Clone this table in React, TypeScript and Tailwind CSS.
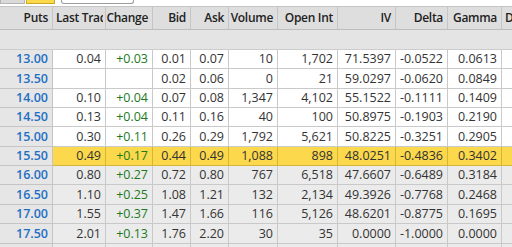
const cols = ['Puts', 'Last Trade', 'Change', 'Bid', 'Ask', 'Volume', 'Open Int', 'IV', 'Delta', 'Gamma', 'Dollar Delta'];

const rows: string[][] = [
    ['13.00', '0.04', '+0.03', '0.01', '0.07', '10', '1,702', '71.5397', '-0.0522', '0.0613', '3.17'],
    ['13.50', '', '', '0.02', '0.06', '0', '21', '59.0297', '-0.0620', '0.0849', '3.77'],
    ['14.00', '0.10', '+0.04', '0.07', '0.08', '1,347', '4,102', '55.1522', '-0.1111', '0.1409', '6.75'],
    ['14.50', '0.13', '+0.04', '0.11', '0.16', '40', '100', '50.8975', '-0.1903', '0.2190', '11.57'],
    ['15.00', '0.30', '+0.11', '0.26', '0.29', '1,792', '5,621', '50.8225', '-0.3251', '0.2905', '19.76'],
    ['15.50', '0.49', '+0.17', '0.44', '0.49', '1,088', '898', '48.0251', '-0.4836', '0.3402', '29.40'],
    ['16.00', '0.80', '+0.27', '0.72', '0.80', '767', '6,518', '47.6607', '-0.6489', '0.3184', '39.45'],
    ['16.50', '1.10', '+0.25', '1.08', '1.21', '132', '2,134', '49.3926', '-0.7768', '0.2468', '47.22'],
    ['17.00', '1.55', '+0.37', '1.47', '1.66', '116', '5,126', '48.6201', '-0.8775', '0.1695', '53.35'],
    ['17.50', '2.01', '+0.13', '1.76', '2.20', '30', '35', '0.0000', '-1.0000', '0.0000', '60.80'],
    ['18.00', '2.45', '+0.10', '2.22', '2.75', '12', '40', '0.0000', '-1.0000', '0.0000', '60.80'],
];

// row pitch in the picture is ~19.4px, so mix 19 and 20
const heights = ['h-[19px]', 'h-[20px]', 'h-[19px]', 'h-[19px]', 'h-[20px]', 'h-[19px]', 'h-[19px]', 'h-[20px]', 'h-[19px]', 'h-[20px]', 'h-[20px]'];

const grid = 'grid grid-cols-[53px_53px_47px_38px_38px_49px_60px_58px_52px_54px_70px] w-[572px]';
const ATM = 5;

const OptionChain = () => {
    return (
        <div className="w-[512px] h-[247px] overflow-hidden bg-white text-[12.5px] leading-[16px] text-[#333]" style={{ fontFamily: '"Open Sans", "Noto Sans", sans-serif' }}>
            {/* toolbar bottoms, cut off at the top */}
            <div className="flex items-start h-[6px] gap-px">
                <div className="w-[25px] h-[4px] bg-[#dadada] border border-t-0 border-[#b5b5b5]" />
                <div className="w-[29px] h-[4px] bg-[#fcd94a] border border-t-0 border-[#c9a92a]" />
                <div className="ml-[5px] w-[73px] h-[4px] bg-white border border-t-0 border-[#9c9c9c] rounded-b-[3px]" />
            </div>

            <div className={`${grid} h-[24px] bg-[#dedede] border-t border-[#c4c4c4] border-b border-b-[#bdbdbd] font-semibold text-[12px] tracking-[-0.3px] text-[#222]`}>
                {cols.map((c, i) => (
                    <div
                        key={c}
                        className={`flex items-center overflow-hidden whitespace-nowrap border-r border-[#c6c6c6] ${i === 1 || i === 10 ? 'justify-start pl-[3px]' : 'justify-end pr-[4px]'}`}
                    >
                        {i === 1 ? <span className="block w-[47px] overflow-hidden">{c}</span> : c}
                    </div>
                ))}
            </div>

            <div className={`${grid} h-[20px] bg-[#e4e4e4] border-b border-[#cccccc]`}>
                {cols.map((c) => (
                    <div key={c} />
                ))}
            </div>

            {rows.map((r, ri) => {
                const rowBg = ri === ATM ? 'bg-[#fbd84c]' : ri > ATM ? 'bg-[#ebebeb]' : 'bg-white';
                return (
                    <div key={r[0]} className={`${grid} ${heights[ri]}`}>
                        {r.map((v, ci) => (
                            <div
                                key={ci}
                                className={`flex items-center justify-end pr-[4px] whitespace-nowrap border-b border-r ${
                                    ci === 0
                                        ? 'bg-[#e6e6e6] text-[#1f6fc5] font-semibold border-[#c4c4c4]'
                                        : `${rowBg} ${ri === ATM ? 'border-[#d4b53a]' : 'border-[#c9c9c9]'}`
                                } ${ci === 2 ? 'text-[#1c7a1c] font-medium' : ''}`}
                            >
                                {v}
                            </div>
                        ))}
                    </div>
                );
            })}
        </div>
    );
};

export default function App() {
    return <OptionChain />;
}
